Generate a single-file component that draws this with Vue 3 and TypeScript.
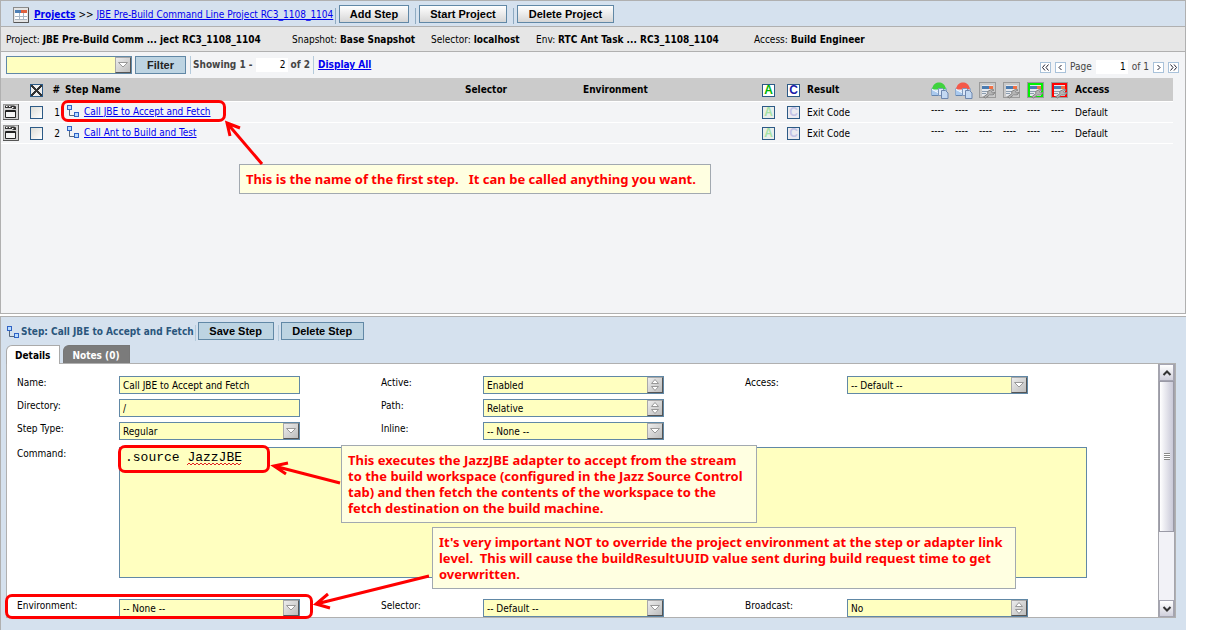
<script setup lang="ts">
import { ref } from 'vue'

interface Field {
  id: string
  label: string
  value: string
  kind: 'text' | 'drop' | 'toggle'
}

const info = [
  { label: 'Project:', value: 'JBE Pre-Build Comm ... ject RC3_1108_1104' },
  { label: 'Snapshot:', value: 'Base Snapshot' },
  { label: 'Selector:', value: 'localhost' },
  { label: 'Env:', value: 'RTC Ant Task ... RC3_1108_1104' },
  { label: 'Access:', value: 'Build Engineer' },
]

const steps = [
  { id: 1, name: 'Call JBE to Accept and Fetch', result: 'Exit Code', access: 'Default' },
  { id: 2, name: 'Call Ant to Build and Test', result: 'Exit Code', access: 'Default' },
]

const eventIcons = [
  { title: 'Pass notify', kind: 'mail', color: '#3fd23f' },
  { title: 'Fail notify', kind: 'mail', color: '#f4594a' },
  { title: 'Pass chain', kind: 'form', color: '#c9c9c9' },
  { title: 'Fail chain', kind: 'form', color: '#c9c9c9' },
  { title: 'Pass wait', kind: 'form', color: '#00f000' },
  { title: 'Fail wait', kind: 'form', color: '#ff0000' },
]

const columns: Field[][] = [
  [
    { id: 'name', label: 'Name:', value: 'Call JBE to Accept and Fetch', kind: 'text' },
    { id: 'directory', label: 'Directory:', value: '/', kind: 'text' },
    { id: 'type', label: 'Step Type:', value: 'Regular', kind: 'drop' },
  ],
  [
    { id: 'active', label: 'Active:', value: 'Enabled', kind: 'toggle' },
    { id: 'path', label: 'Path:', value: 'Relative', kind: 'toggle' },
    { id: 'inline', label: 'Inline:', value: '-- None --', kind: 'drop' },
  ],
  [{ id: 'access', label: 'Access:', value: '-- Default --', kind: 'drop' }],
]

const bottomFields: Field[] = [
  { id: 'environment', label: 'Environment:', value: '-- None --', kind: 'drop' },
  { id: 'selector', label: 'Selector:', value: '-- Default --', kind: 'drop' },
  { id: 'broadcast', label: 'Broadcast:', value: 'No', kind: 'toggle' },
]

const dropShape = 'M2.500 4.500h9L7 9z'
const toggleShape = 'M3.500 5.500h7L7 1.500zM3.500 8.500h7L7 12.500z'

const command = ref('.source JazzJBE')
const allChecked = ref(true)
const shown = ref('2')
const page = ref('1')
</script>

<template>
  <div class="app">
    <section class="list-panel">
      <header class="toolbar">
        <nav class="crumbs">
          <svg class="form-icon" width="16" height="16" viewBox="0 0 16 16">
            <rect x="0.5" y="0.5" width="15" height="15" fill="#e4e4e4" stroke="#8c8c8c" />
            <path d="M1 15.5h14.5V1" fill="none" stroke="#555" />
            <rect x="2" y="3" width="6" height="3" fill="#4d7fb5" />
            <rect x="8" y="3" width="6" height="3" fill="#e0623f" />
            <rect x="2" y="6" width="12" height="7" fill="#fff" />
            <path d="M2 9.5h12M2 12.5h12M6.5 6v7M10.5 6v7" stroke="#a9b6c4" fill="none" />
          </svg>
          <a href="#" class="strong">Projects</a>
          <span>&gt;&gt;</span>
          <a href="#">JBE Pre-Build Command Line Project RC3_1108_1104</a>
        </nav>
        <button type="button" class="btn light add">Add Step</button>
        <button type="button" class="btn light start">Start Project</button>
        <button type="button" class="btn light del">Delete Project</button>
      </header>

      <div class="info">
        <span v-for="item in info" :key="item.label">{{ item.label }} <b>{{ item.value }}</b></span>
      </div>

      <div class="filter-bar">
        <div class="select filter-select">
          <select aria-label="Filter"><option></option></select>
          <svg class="knob" viewBox="0 0 14 14"><path :d="dropShape" /></svg>
        </div>
        <button type="button" class="btn blue filter-btn">Filter</button>
        <div class="showing">
          <label for="shown">Showing 1 -</label>
          <input id="shown" v-model="shown" class="num" type="text" />
          <span>of 2</span>
        </div>
        <a href="#" class="strong display-all">Display All</a>
        <div class="pager">
          <button type="button" aria-label="First page">
            <svg viewBox="0 0 9 9"><path d="M4 1.500L1.500 4.500L4 7.500M7.500 1.500L5 4.500L7.500 7.500" /></svg>
          </button>
          <button type="button" aria-label="Previous page">
            <svg viewBox="0 0 9 9"><path d="M5.500 2L3 4.500L5.500 7" /></svg>
          </button>
          <label for="page">Page</label>
          <input id="page" v-model="page" class="num" type="text" />
          <span>of 1</span>
          <button type="button" aria-label="Next page">
            <svg viewBox="0 0 9 9"><path d="M3.500 2L6 4.500L3.500 7" /></svg>
          </button>
          <button type="button" aria-label="Last page">
            <svg viewBox="0 0 9 9"><path d="M1.500 1.500L4 4.500L1.500 7.500M5 1.500L7.500 4.500L5 7.500" /></svg>
          </button>
        </div>
      </div>

      <table class="steps">
        <colgroup>
          <col class="c-menu" /><col class="c-check" /><col class="c-num" /><col />
          <col class="c-sel" /><col class="c-env" /><col class="c-a" /><col class="c-c" /><col class="c-res" />
          <col v-for="e in eventIcons" :key="e.title" class="c-ev" /><col class="c-acc" />
        </colgroup>
        <thead>
          <tr>
            <th></th>
            <th><input v-model="allChecked" type="checkbox" class="check" aria-label="Select all" /></th>
            <th class="num-cell">#</th>
            <th class="name-cell">Step Name</th>
            <th>Selector</th>
            <th>Environment</th>
            <th><span class="flag green">A</span></th>
            <th><span class="flag navy">C</span></th>
            <th>Result</th>
            <th v-for="e in eventIcons" :key="e.title">
              <svg v-if="e.kind === 'mail'" width="18" height="17" viewBox="0 0 18 17" role="img" :aria-label="e.title">
                <path d="M0.500 6.500L3 5h10l2.500 1.500V13.500H0.500z" fill="#e3eefb" stroke="#8fa9c9" />
                <path d="M1 7.500C2 2 5 0.500 8 0.500S14 2 15 7.500z" :fill="e.color" />
                <path d="M1 7l7 3 6-3v6H1z" fill="#a9c9ee" />
                <path d="M1 7.500l7 3.500" stroke="#fff" />
                <path d="M1 13.500h9" stroke="#6585ae" />
                <path d="M7.500 6.500h4l2 2v5h-6z" fill="#dce8f8" stroke="#7e98bd" />
                <path d="M10.500 8.500h4l2.500 2.500v5.500h-6.500z" fill="#c3d8f2" stroke="#6d86ae" />
              </svg>
              <svg v-else width="18" height="17" viewBox="0 0 18 17" role="img" :aria-label="e.title">
                <rect x="0.500" y="0.500" width="16" height="15" :fill="e.color" stroke="#9a9a9a" />
                <rect x="3" y="3" width="11" height="11" fill="#e6e9ed" />
                <rect x="3" y="4" width="7" height="3" fill="#4b7bb0" />
                <rect x="10" y="4" width="4" height="3" fill="#ef7145" />
                <path d="M3 9.500h7M3 11.500h4" stroke="#8b9cae" />
                <path d="M4.500 15L9 11.500L8.500 9.500L12.500 7.500L15 8L12.500 9.500L13.500 11L16 10.500L14 13L10.500 13L6.500 16z" fill="#b5b5b5" stroke="#858585" />
              </svg>
            </th>
            <th>Access</th>
          </tr>
        </thead>
        <tbody>
          <tr v-for="step in steps" :key="step.id">
            <td class="menu-cell">
              <button type="button" class="menu-btn" :aria-label="'Menu for step ' + step.id">
                <svg width="16" height="16" viewBox="0 0 16 16">
                  <rect x="0.500" y="0.500" width="15" height="15" fill="#d5d5d5" stroke="#999" />
                  <path d="M0 15.500h15.500V0" fill="none" stroke="#555" />
                  <path d="M2 1.500h9l2 1v2.500h-3l-1-1H2z" fill="#333" />
                  <path d="M3 2.500h1.500M6 2.500h1.500M9 3.500h1.500" stroke="#fff" />
                  <path d="M2.500 6.500h10v7h-10z" fill="#f5f5f5" stroke="#222" />
                  <path d="M3 7.500h9" stroke="#222" />
                </svg>
              </button>
            </td>
            <td><input type="checkbox" class="check" :aria-label="'Select step ' + step.id" /></td>
            <td class="num-cell">{{ step.id }}</td>
            <td class="link-cell">
              <div class="step-name">
                <svg width="13" height="13" viewBox="0 0 13 13">
                  <path d="M2.500 4v6.500H8" fill="none" stroke="#55677d" />
                  <rect x="0.500" y="0.500" width="4" height="4" fill="#b9dcff" stroke="#2f62c4" />
                  <rect x="7.500" y="7.500" width="4" height="4" fill="#b9dcff" stroke="#2f62c4" />
                </svg>
                <a href="#">{{ step.name }}</a>
              </div>
            </td>
            <td></td>
            <td></td>
            <td><span class="flag green faint">A</span></td>
            <td><span class="flag navy faint">C</span></td>
            <td>{{ step.result }}</td>
            <td v-for="e in eventIcons" :key="e.title" class="dash">----</td>
            <td>{{ step.access }}</td>
          </tr>
        </tbody>
      </table>
    </section>

    <section class="detail-panel">
      <header class="detail-head">
        <h2>
          <svg width="13" height="13" viewBox="0 0 13 13">
            <path d="M2.500 4v6.500H8" fill="none" stroke="#55677d" />
            <rect x="0.500" y="0.500" width="4" height="4" fill="#b9dcff" stroke="#2f62c4" />
            <rect x="7.500" y="7.500" width="4" height="4" fill="#b9dcff" stroke="#2f62c4" />
          </svg>
          Step: Call JBE to Accept and Fetch
        </h2>
        <button type="button" class="btn blue split save">Save Step</button>
        <button type="button" class="btn blue split remove">Delete Step</button>
      </header>

      <div class="tabs" role="tablist">
        <button type="button" role="tab" class="tab active" aria-selected="true">Details</button>
        <button type="button" role="tab" class="tab" aria-selected="false">Notes (0)</button>
      </div>

      <div class="tab-body">
        <form class="form" @submit.prevent>
          <div class="grid">
            <div v-for="(col, i) in columns" :key="i" class="col">
              <div v-for="f in col" :key="f.id" class="field">
                <label :for="f.id">{{ f.label }}</label>
                <input v-if="f.kind === 'text'" :id="f.id" type="text" class="box" :value="f.value" />
                <div v-else class="select box-select">
                  <select :id="f.id"><option>{{ f.value }}</option></select>
                  <svg class="knob" viewBox="0 0 14 14"><path :d="f.kind === 'drop' ? dropShape : toggleShape" /></svg>
                </div>
              </div>
            </div>
          </div>

          <div class="field command">
            <label for="command">Command:</label>
            <div class="command-box">
              <textarea id="command" v-model="command" spellcheck="false"></textarea>
              <svg class="squiggle" width="56" height="4" viewBox="0 0 56 4">
                <path d="M0 3l2-2 2 2 2-2 2 2 2-2 2 2 2-2 2 2 2-2 2 2 2-2 2 2 2-2 2 2 2-2 2 2 2-2 2 2 2-2 2 2 2-2 2 2 2-2 2 2 2-2 2 2 2-2" fill="none" stroke="#e02020" />
              </svg>
            </div>
          </div>

          <div class="grid bottom">
            <div v-for="f in bottomFields" :key="f.id" class="field">
              <label :for="f.id">{{ f.label }}</label>
              <div class="select box-select">
                <select :id="f.id"><option>{{ f.value }}</option></select>
                <svg class="knob" viewBox="0 0 14 14"><path :d="f.kind === 'drop' ? dropShape : toggleShape" /></svg>
              </div>
            </div>
          </div>
        </form>
        <div class="scrollbar">
          <button type="button" class="sb-btn" aria-label="Scroll up">
            <svg viewBox="0 0 10 8"><path d="M1.500 6L5 2.500L8.500 6" /></svg>
          </button>
          <div class="thumb"><i></i></div>
          <button type="button" class="sb-btn" aria-label="Scroll down">
            <svg viewBox="0 0 10 8"><path d="M1.500 2L5 5.500L8.500 2" /></svg>
          </button>
        </div>
      </div>
    </section>

    <div class="ring ring-step"></div>
    <div class="ring ring-command"></div>
    <div class="ring ring-env"></div>
    <p class="note note-step">This is the name of the first step.&nbsp;&nbsp; It can be called anything you want.</p>
    <p class="note note-command">This executes the JazzJBE adapter to accept from the stream<br />to the build workspace (configured in the Jazz Source Control<br />tab) and then fetch the contents of the workspace to the<br />fetch destination on the build machine.</p>
    <p class="note note-env">It's very important NOT to override the project environment at the step or adapter link<br />level.&nbsp; This will cause the buildResultUUID value sent during build request time to get<br />overwritten.</p>
    <svg class="arrows" width="440" height="630" viewBox="0 0 440 630">
      <path d="M262 164L227 123M230 136L227 123L240 128" />
      <path d="M340 483L274 466M288 463L274 466L286 474" />
      <path d="M429 576L316 604M328 594L316 604L330 608" />
    </svg>
  </div>
</template>

<style>
body {
  background: #fff;
}
</style>

<style scoped>
.app {
  --ui: 'DejaVu Sans Condensed', 'DejaVu Sans', sans-serif;
  --fs: 10px;
  --line: #b0b0b0;
  --blue-line: #6188a6;
  --pale: #ffffc0;
  position: relative;
  display: flex;
  flex-direction: column;
  gap: 2px;
  min-height: 100vh;
  margin-right: 32px;
  font-family: var(--ui);
  font-size: var(--fs);
  line-height: 14px;
  color: #000;
}
.app *,
.app *::before,
.app *::after {
  box-sizing: border-box;
}
button,
input,
select,
textarea {
  font: inherit;
  color: inherit;
  margin: 0;
}
a {
  color: #0000f0;
}
svg {
  display: block;
  flex: none;
}
.strong {
  font-weight: bold;
}

.list-panel {
  height: 314px;
  border: 1px solid var(--line);
  background: #f3f4f6;
}
.toolbar {
  display: flex;
  align-items: center;
  height: 26px;
  padding-left: 12px;
  background: #d5e1ee;
  border-bottom: 1px solid var(--line);
}
.crumbs {
  display: flex;
  align-items: center;
  gap: 3px;
  min-width: 321px;
  padding-top: 2px;
  white-space: nowrap;
}
.form-icon {
  margin-right: 2px;
}
.btn {
  height: 18px;
  padding: 0;
  border: 1px solid var(--blue-line);
  font: bold 11px/14px 'Liberation Sans', Arial, sans-serif;
  white-space: nowrap;
  color: #000;
}
.light {
  background: linear-gradient(#fff, #d6d6d6);
}
.light,
.split {
  position: relative;
}
.light::before,
.split::before {
  content: '';
  position: absolute;
  left: -5px;
  top: 2px;
  width: 1px;
  height: 16px;
  background: #8fabc2;
}
.split::before {
  left: -4px;
  background: #b4cadb;
}
.blue {
  background: #bdd4e2;
}
.add {
  width: 70px;
  margin-left: 5px;
}
.start {
  width: 88px;
  margin-left: 10px;
}
.del {
  width: 97px;
  margin-left: 10px;
}

.info {
  display: grid;
  grid-template-columns: 286px 139px 105px 218px 1fr;
  align-items: center;
  height: 25px;
  padding: 2px 0 0 5px;
  background: #e6e6e6;
  border-bottom: 1px solid var(--line);
  white-space: nowrap;
}

.filter-bar {
  display: flex;
  align-items: center;
  height: 26px;
  padding: 0 6px 0 5px;
  color: #444;
}
.select {
  position: relative;
}
.select select {
  display: block;
  width: 100%;
  height: 18px;
  padding: 2px 20px 0 3px;
  border: 1px solid var(--blue-line);
  border-radius: 0;
  background: var(--pale);
  color: #000;
  appearance: none;
}
.knob {
  position: absolute;
  right: 1px;
  top: 1px;
  width: 16px;
  height: 16px;
  background: linear-gradient(135deg, #ececec, #bdbdbd);
  border: 1px solid #a9a9a9;
  border-right-color: #555;
  border-bottom-color: #555;
  fill: #fff;
  stroke: #999;
  pointer-events: none;
}
.filter-select {
  width: 126px;
}
.filter-btn {
  width: 51px;
  margin: 0 4px 0 3px;
  color: #222;
}
.showing {
  display: flex;
  align-items: center;
  gap: 3px;
  padding: 2px 3px 2px 2px;
  border-left: 1px solid #b4cadb;
  border-right: 1px solid #b4cadb;
  font-weight: bold;
}
.display-all {
  margin-left: 4px;
}
.num {
  width: 32px;
  height: 14px;
  padding: 0 2px;
  border: 0;
  background: #fff;
  color: #000;
  text-align: right;
  font-weight: normal;
}
.pager {
  display: flex;
  align-items: center;
  gap: 4px;
  margin: 4px 0 0 auto;
}
.pager button {
  width: 11px;
  height: 11px;
  padding: 0;
  border: 1px solid #a9c2da;
  background: #fff;
}
.pager svg {
  width: 9px;
  height: 9px;
  fill: none;
  stroke: #223;
}

.steps {
  width: calc(100% - 12px);
  table-layout: fixed;
  border-collapse: collapse;
}
.c-menu { width: 27px; }
.c-check { width: 20px; }
.c-num { width: 14px; }
.c-sel { width: 118px; }
.c-env { width: 179px; }
.c-a { width: 25px; }
.c-c { width: 20px; }
.c-res { width: 124px; }
.c-ev { width: 24px; }
.c-acc { width: 100px; }
.steps th,
.steps td {
  padding: 2px 2px 0;
  text-align: left;
  white-space: nowrap;
}
.steps th {
  height: 23px;
  background: #cbcbcb;
}
.steps td {
  height: 21px;
}
.steps tr {
  border-bottom: 1px solid #fff;
}
.steps .num-cell {
  text-align: right;
}
.steps .name-cell {
  padding-left: 3px;
}
.steps .menu-cell,
.steps .link-cell {
  padding-top: 0;
}
.steps .dash {
  padding: 0 2px 4px;
}
.check {
  display: block;
  width: 13px;
  height: 13px;
  appearance: none;
  border: 1px solid #2c5a86;
  background: linear-gradient(135deg, #dcdcd6, #fff);
}
.check:checked {
  background:
    linear-gradient(45deg, transparent 41%, #333 42%, #333 58%, transparent 59%),
    linear-gradient(135deg, #eee 41%, #333 42%, #333 58%, #eee 59%);
}
.flag {
  display: block;
  width: 13px;
  height: 13px;
  border: 1px solid #2c5a86;
  background: #fff;
  font: bold 12px/11px 'Liberation Sans', Arial, sans-serif;
  text-align: center;
}
.green {
  color: #00b400;
}
.navy {
  color: #1a1aa8;
}
.green.faint {
  color: #a5e2a5;
  background: #e9eeea;
}
.navy.faint {
  color: #c3c3e6;
  background: #ebebf0;
}
.menu-btn {
  display: block;
  padding: 0;
  border: 0;
  background: none;
}
.step-name {
  display: flex;
  align-items: center;
  gap: 4px;
  padding-left: 3px;
}

.detail-panel {
  flex: 1;
  border: 1px solid var(--line);
  border-width: 1px 0 0 1px;
  background: #d5e1ee;
  padding: 0 10px 12px 5px;
}
.detail-head {
  display: flex;
  align-items: center;
  height: 28px;
}
.detail-head h2 {
  display: flex;
  align-items: center;
  gap: 1px;
  min-width: 187px;
  margin: 0;
  padding: 2px 0 0 1px;
  font-size: var(--fs);
  color: #2a567c;
  white-space: nowrap;
}
.save {
  width: 76px;
  margin-left: 4px;
}
.remove {
  width: 83px;
  margin-left: 7px;
}
.tabs {
  display: flex;
  gap: 3px;
}
.tab {
  height: 18px;
  padding: 2px 9px 0 8px;
  border: 1px solid #777;
  border-bottom: 0;
  border-radius: 6px 0 0 0;
  background: #7b7b7b;
  color: #fff;
  font-weight: bold;
}
.tab.active {
  height: 19px;
  margin-bottom: -1px;
  border-color: #aaa;
  background: #fff;
  color: #000;
  z-index: 1;
}
.tab-body {
  display: flex;
  border: 1px solid var(--line);
  background: #fff;
}
.form {
  flex: 1;
  padding: 12px 49px 0 10px;
}
.grid {
  display: grid;
  grid-template-columns: repeat(3, minmax(0, 1fr));
}
.col {
  display: flex;
  flex-direction: column;
  gap: 5px;
}
.field {
  display: flex;
  align-items: flex-start;
}
.field label {
  width: 102px;
  flex: none;
}
.box,
.box-select {
  width: 181px;
}
.box {
  height: 18px;
  padding: 1px 3px 0;
  border: 1px solid var(--blue-line);
  background: var(--pale);
}
.command {
  margin: 7px 22px 0 0;
}
.command-box {
  position: relative;
  flex: 1;
}
.command textarea {
  display: block;
  width: 100%;
  height: 131px;
  padding: 2px 5px;
  border: 1px solid var(--blue-line);
  background: var(--pale);
  font: 13px/16px 'Liberation Mono', 'Courier New', monospace;
  resize: none;
}
.squiggle {
  position: absolute;
  left: 68px;
  top: 15px;
}
.bottom {
  margin-top: 21px;
}
.scrollbar {
  display: flex;
  flex-direction: column;
  width: 17px;
  border: 1px solid #a5a5ad;
  border-width: 0 1px;
  background: #f2f2f7;
}
.sb-btn {
  height: 17px;
  padding: 0;
  border: 1px solid #a5a5b2;
  background: linear-gradient(#fff, #d0d0dc);
  flex: none;
}
.sb-btn svg {
  width: 10px;
  height: 8px;
  margin: 0 auto;
  fill: none;
  stroke: #333;
  stroke-width: 2;
}
.thumb {
  display: flex;
  align-items: center;
  justify-content: center;
  height: 151px;
  margin-bottom: auto;
  border: 1px solid #9a9aa6;
  background: linear-gradient(90deg, #fff, #c9c9d8);
}
.thumb i {
  width: 6px;
  height: 7px;
  background: repeating-linear-gradient(#888 0 1px, #fff 1px 2px);
}

.ring {
  position: absolute;
  border: 3px solid #f00;
  border-radius: 7px;
  pointer-events: none;
}
.ring-step { left: 61px; top: 100px; width: 165px; height: 22px; }
.ring-command { left: 118px; top: 445px; width: 152px; height: 28px; }
.ring-env { left: 5px; top: 594px; width: 308px; height: 25px; }
.note {
  position: absolute;
  margin: 0;
  padding: 6px;
  border: 1px solid #a2a9b0;
  background: #ffffe1;
  color: #f00;
  font-family: 'Noto Sans', var(--ui);
  font-size: 13px;
  line-height: 16px;
  font-weight: bold;
  white-space: nowrap;
}
.note-step { left: 239px; top: 164px; width: 472px; }
.note-command { left: 341px; top: 445px; width: 416px; height: 78px; }
.note-env { left: 432px; top: 527px; width: 584px; }
.arrows {
  position: absolute;
  left: 0;
  top: 0;
  fill: none;
  stroke: #f00;
  stroke-width: 3;
  pointer-events: none;
}
</style>
